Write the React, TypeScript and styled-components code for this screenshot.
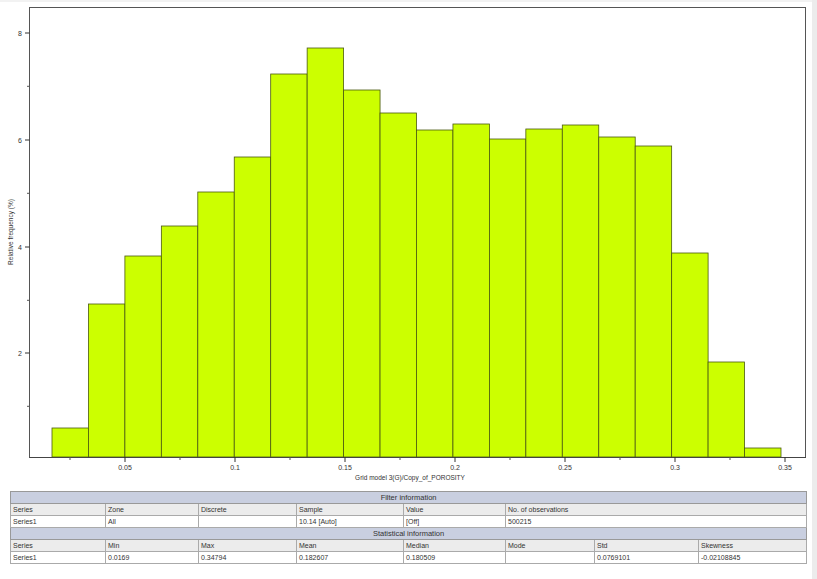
import React from 'react';
import styled, { createGlobalStyle } from 'styled-components';

const Global = createGlobalStyle`
  html, body { margin: 0; padding: 0; background: #ececec; }
  body { font-family: "Liberation Sans", Arial, sans-serif; }
`;

const Page = styled.div`
  width: 812px;
  height: 579px;
  background: #fff;
  border-top: 2px solid #f2f2f2;
  box-sizing: border-box;
`;

const Chart = styled.svg`
  display: block;
`;

const TablePanel = styled.div`
  padding: 6px 6px 0 10px;
`;

const Table = styled.table`
  width: 796px;
  border-collapse: collapse;
  table-layout: fixed;
  font-size: 7px;
  color: #333;
  border: 1px solid #999;
`;

const Title = styled.td`
  background: #c9cfe0;
  text-align: center;
  height: 11px;
  padding: 0 2px;
  border: 1px solid #999;
  font-size: 7.5px;
`;

const Cell = styled.td<{ $head?: boolean }>`
  background: ${p => (p.$head ? '#ececec' : '#fff')};
  height: 11px;
  padding: 0 2px;
  border: 1px solid #aaa;
  white-space: nowrap;
`;

const bars = [428, 304, 256, 226, 192, 157, 74, 48, 90, 113, 130, 124, 139, 129, 125, 137, 146, 253, 362, 448];
const x0 = 52;
const bw = 36.45;
const xTicks = [
  { v: '0.05', x: 125 },
  { v: '0.1', x: 235 },
  { v: '0.15', x: 345 },
  { v: '0.2', x: 455 },
  { v: '0.25', x: 565 },
  { v: '0.3', x: 675 },
  { v: '0.35', x: 785 },
];
const yTicks = [
  { v: '8', y: 33 },
  { v: '6', y: 140 },
  { v: '4', y: 247 },
  { v: '2', y: 353 },
];

const widths = [95, 93, 98, 107, 102, 89, 104, 108];

const App: React.FC = () => (
  <>
    <Global />
    <Page>
      <Chart width={812} height={483} viewBox="0 2 812 483">
        <rect x={29.5} y={7.5} width={776} height={450} fill="#fff" stroke="#555" strokeWidth={1} />
        {bars.map((top, i) => (
          <rect
            key={i}
            x={x0 + i * bw}
            y={top}
            width={bw}
            height={457 - top}
            fill="#ccff00"
            stroke="#4a5a10"
            strokeWidth={0.8}
          />
        ))}
        <line x1={29.5} y1={457.5} x2={806} y2={457.5} stroke="#444" />
        {xTicks.map(t => (
          <g key={t.v}>
            <line x1={t.x} y1={457} x2={t.x} y2={462} stroke="#333" />
            <text x={t.x} y={470} fontSize={7} textAnchor="middle" fill="#333">{t.v}</text>
          </g>
        ))}
        {xTicks.map(t => (
          <line key={'m' + t.v} x1={t.x - 55} y1={457} x2={t.x - 55} y2={460} stroke="#555" />
        ))}
        {yTicks.map(t => (
          <g key={t.v}>
            <line x1={25} y1={t.y} x2={29.5} y2={t.y} stroke="#333" />
            <text x={22} y={t.y + 2.5} fontSize={7} textAnchor="end" fill="#333">{t.v}</text>
            <line x1={27} y1={t.y + 53.3} x2={29.5} y2={t.y + 53.3} stroke="#555" />
          </g>
        ))}
        <text x={13} y={232} fontSize={6.5} textAnchor="middle" fill="#333" transform="rotate(-90 13 232)">
          Relative frequency (%)
        </text>
        <text x={410} y={480} fontSize={6.5} textAnchor="middle" fill="#333">
          Grid model 3(G)/Copy_of_POROSITY
        </text>
      </Chart>
      <TablePanel>
        <Table>
          <colgroup>
            {widths.map((w, i) => <col key={i} style={{ width: w }} />)}
          </colgroup>
          <tbody>
            <tr><Title colSpan={8}>Filter information</Title></tr>
            <tr>
              <Cell $head>Series</Cell><Cell $head>Zone</Cell><Cell $head>Discrete</Cell>
              <Cell $head>Sample</Cell><Cell $head>Value</Cell><Cell $head colSpan={3}>No. of observations</Cell>
            </tr>
            <tr>
              <Cell>Series1</Cell><Cell>All</Cell><Cell></Cell>
              <Cell>10.14 [Auto]</Cell><Cell>[Off]</Cell><Cell colSpan={3}>500215</Cell>
            </tr>
            <tr><Title colSpan={8}>Statistical information</Title></tr>
            <tr>
              <Cell $head>Series</Cell><Cell $head>Min</Cell><Cell $head>Max</Cell><Cell $head>Mean</Cell>
              <Cell $head>Median</Cell><Cell $head>Mode</Cell><Cell $head>Std</Cell><Cell $head>Skewness</Cell>
            </tr>
            <tr>
              <Cell>Series1</Cell><Cell>0.0169</Cell><Cell>0.34794</Cell><Cell>0.182607</Cell>
              <Cell>0.180509</Cell><Cell></Cell><Cell>0.0769101</Cell><Cell>-0.02108845</Cell>
            </tr>
          </tbody>
        </Table>
      </TablePanel>
    </Page>
  </>
);

export default App;
